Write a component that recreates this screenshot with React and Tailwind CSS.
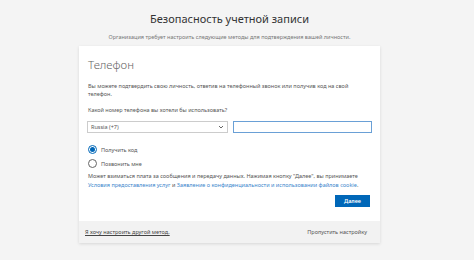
import React, { useState } from 'react';

const font = { fontFamily: '"Noto Sans", "Open Sans", Arial, sans-serif' };

const Radio = ({ checked, label, onClick }) => (
  <label className="h-[9px] flex items-center gap-[4px] cursor-pointer" onClick={onClick}>
    <span className={`w-[9px] h-[9px] rounded-full border flex items-center justify-center ${checked ? 'border-[#0067b8]' : 'border-[#666]'}`}>
      {checked && <span className="w-[5px] h-[5px] rounded-full bg-[#0067b8]" />}
    </span>
    <span className="text-[5.5px] leading-[8px] text-[#555]">{label}</span>
  </label>
);

export default function App() {
  const [method, setMethod] = useState('code');

  return (
    <div className="w-[474px] h-[264px] bg-[#f4f4f4] overflow-hidden flex flex-col" style={font}>
      <div className="w-[459px] flex flex-col items-center">
        <h1 className="mt-[11px] text-[11px] leading-[15px] text-[#333]">Безопасность учетной записи</h1>
        <p className="mt-[7px] text-[5.5px] leading-[8px] text-[#777]">
          Организация требует настроить следующие методы для подтверждения вашей личности.
        </p>

        <div className="mt-[5px] w-[301px] bg-white shadow-[0_1px_3px_rgba(0,0,0,0.12)]">
          <div className="px-[8px] pt-[11px] pb-[14px]">
            <h2 className="ml-[1px] text-[11.5px] leading-[16px] text-[#666] font-light">Телефон</h2>
            <p className="mt-[9px] ml-[1px] pr-[20px] text-[5.5px] leading-[8px] text-[#555]">
              Вы можете подтвердить свою личность, ответив на телефонный звонок или получив код на свой телефон.
            </p>
            <p className="mt-[8px] ml-[1px] text-[5.5px] leading-[8px] text-[#555]">
              Какой номер телефона вы хотели бы использовать?
            </p>
            <div className="mt-[7px] flex gap-[5px]">
              <div className="w-[141px] h-[12px] border border-[#ccc] flex items-center justify-between px-[3px]">
                <span className="text-[5.5px] text-[#555]">Russia (+7)</span>
                <svg width="6" height="4" viewBox="0 0 6 4" fill="none" stroke="#666" strokeWidth="1">
                  <path d="M1 1l2 2 2-2" />
                </svg>
              </div>
              <input
                type="text"
                className="w-[140px] h-[12px] border border-[#6aa0d6] outline-none px-[3px] text-[5.5px]"
              />
            </div>
            <div className="mt-[12px] ml-[1px] flex flex-col gap-[5px]">
              <Radio checked={method === 'code'} label="Получить код" onClick={() => setMethod('code')} />
              <Radio checked={method === 'call'} label="Позвонить мне" onClick={() => setMethod('call')} />
            </div>
            <p className="mt-[4px] ml-[1px] text-[5.5px] leading-[9px] text-[#555]">
              Может взиматься плата за сообщения и передачу данных. Нажимая кнопку "Далее", вы принимаете{' '}
              <a className="text-[#3b86cc]">Условия предоставления услуг</a> и{' '}
              <a className="text-[#3b86cc]">Заявление о конфиденциальности и использовании файлов cookie</a>.
            </p>
            <div className="mt-[5px] flex justify-end pr-[2px]">
              <button className="w-[35px] h-[12px] bg-[#0067b8] text-white text-[5.5px] font-semibold">Далее</button>
            </div>
          </div>
          <div className="h-[22px] bg-[#f2f2f2] flex items-center justify-between pl-[6px] pr-[13px]">
            <a className="text-[5.5px] text-[#444] underline">Я хочу настроить другой метод.</a>
            <span className="text-[5.5px] text-[#555]">Пропустить настройку</span>
          </div>
        </div>
      </div>
      <div className="mt-auto h-[4px] bg-white" />
    </div>
  );
}
